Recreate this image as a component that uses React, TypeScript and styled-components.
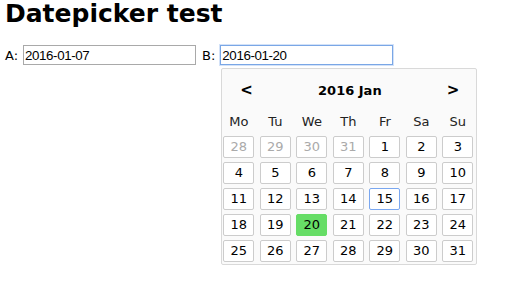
import React from "react";
import styled, { createGlobalStyle } from "styled-components";

const GlobalStyle = createGlobalStyle`
  html, body {
    margin: 0;
    padding: 0;
    background: #ffffff;
  }
  body {
    font-family: "DejaVu Sans", Verdana, sans-serif;
    font-size: 13px;
    color: #000000;
  }
`;

const Page = styled.div`
  padding: 0 5px;
`;

const Title = styled.h1`
  font-family: "DejaVu Sans", Verdana, sans-serif;
  font-weight: bold;
  font-size: 25px;
  line-height: 28px;
  margin: 0 0 17px 0;
`;

const Form = styled.div`
  display: grid;
  grid-template-columns: auto 173px auto 173px;
  align-items: center;
  justify-content: start;
`;

const Label = styled.span<{ $second?: boolean }>`
  font-size: 13px;
  margin-right: 5px;
  margin-left: ${(p) => (p.$second ? "6px" : "0")};
`;

const Input = styled.input<{ $focused?: boolean }>`
  box-sizing: border-box;
  width: 173px;
  height: 20px;
  padding: 1px 1px;
  font-family: "Liberation Sans", Arial, sans-serif;
  font-size: 13.33px;
  letter-spacing: -0.4px;
  color: #000;
  border: 1px solid ${(p) => (p.$focused ? "#7aa7e6" : "#a9a9a9")};
  outline: none;
  box-shadow: ${(p) => (p.$focused ? "0 0 0 1px #d3e2f8" : "none")};
  background: #fff;
`;

const Popup = styled.div`
  grid-column: 4;
  margin-top: 3px;
  margin-left: 1px;
  width: 256px;
  box-sizing: border-box;
  border: 1px solid #d9d9d9;
  border-radius: 2px;
  background: #fafafa;
  padding: 0 2px 2px 1px;
`;

const Header = styled.div`
  display: flex;
  align-items: center;
  justify-content: space-between;
  height: 42px;
  padding: 0 15px 0 17px;
  font-weight: bold;
  font-size: 13px;
`;

const Arrow = styled.span`
  font-weight: bold;
  font-size: 15px;
`;

const Grid = styled.div`
  display: grid;
  grid-template-columns: repeat(7, 31px);
  column-gap: 5.5px;
  row-gap: 4px;
`;

const DayName = styled.div`
  height: 21px;
  line-height: 21px;
  text-align: center;
  color: #222;
`;

const Cell = styled.div<{ $muted?: boolean; $today?: boolean; $selected?: boolean }>`
  box-sizing: border-box;
  height: 22px;
  line-height: 20px;
  text-align: center;
  border-radius: 2px;
  border: 1px solid
    ${(p) => (p.$selected ? "#66dd66" : p.$today ? "#7aa7f0" : "#cccccc")};
  background: ${(p) => (p.$selected ? "#66dd66" : "#ffffff")};
  color: ${(p) => (p.$muted ? "#aaaaaa" : "#000000")};
`;

const dayNames = ["Mo", "Tu", "We", "Th", "Fr", "Sa", "Su"];

const days: { n: number; muted?: boolean }[] = [
  ...[28, 29, 30, 31].map((n) => ({ n, muted: true })),
  ...Array.from({ length: 31 }, (_, i) => ({ n: i + 1 })),
];

const App: React.FC = () => (
  <Page>
    <GlobalStyle />
    <Title>Datepicker test</Title>
    <Form>
      <Label>A:</Label>
      <Input defaultValue="2016-01-07" />
      <Label $second>B:</Label>
      <Input $focused defaultValue="2016-01-20" />
      <Popup>
        <Header>
          <Arrow>&lt;</Arrow>
          <span>2016 Jan</span>
          <Arrow>&gt;</Arrow>
        </Header>
        <Grid>
          {dayNames.map((d) => (
            <DayName key={d}>{d}</DayName>
          ))}
          {days.map((d, i) => (
            <Cell
              key={i}
              $muted={d.muted}
              $today={!d.muted && d.n === 15}
              $selected={!d.muted && d.n === 20}
            >
              {d.n}
            </Cell>
          ))}
        </Grid>
      </Popup>
    </Form>
  </Page>
);

export default App;
